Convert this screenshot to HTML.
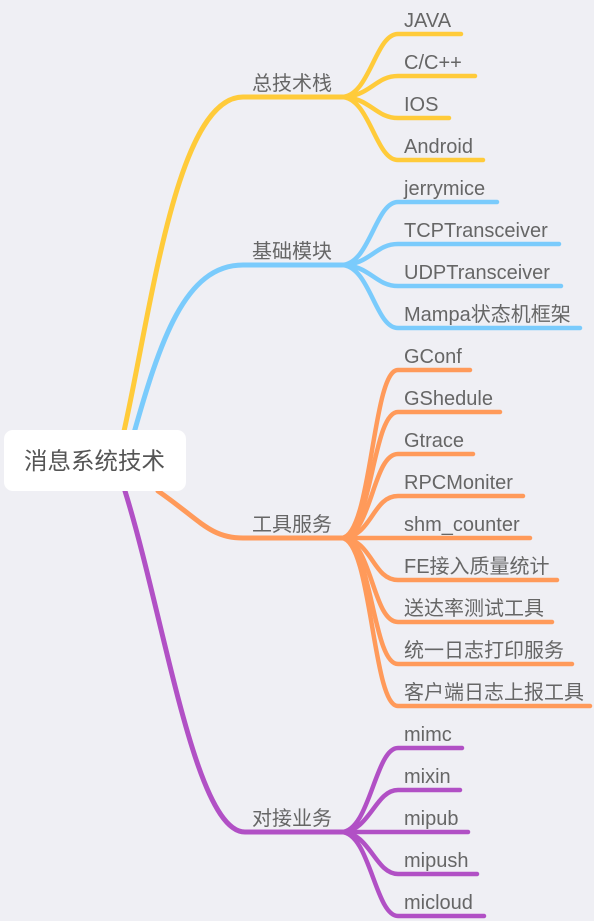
<!DOCTYPE html>
<html><head><meta charset="utf-8"><style>
html,body{margin:0;padding:0;background:#efeff4;}
svg{display:block}
text{font-family:"Liberation Sans","Noto Sans CJK SC",sans-serif;fill:#666;font-size:20px}
</style></head><body>
<svg width="594" height="921" viewBox="0 0 594 921" xmlns="http://www.w3.org/2000/svg">
<g fill="none" stroke-linecap="round" stroke-width="5">
<path stroke="#ffcb3a" d="M122,440 C150,320 175,97 243,97 L341,97"/>
<path stroke="#7acbfc" d="M132,440 C160,340 185,265 243,265 L341,265"/>
<path stroke="#ff9a5a" d="M158,491 C200,520 210,538 243,538 L341,538"/>
<path stroke="#b150c5" d="M125,491 C165,620 195,832 245,832 L341,832"/>
</g>
<g fill="none" stroke-linecap="round" stroke-width="4.5">
<g stroke="#ffcb3a">
<path d="M341,97 C370,97 375,34 398,34 L461,34"/>
<path d="M341,97 C370,97 375,76 398,76 L475,76"/>
<path d="M341,97 C370,97 375,118 398,118 L449,118"/>
<path d="M341,97 C370,97 375,160 398,160 L483,160"/>
</g>
<g stroke="#7acbfc">
<path d="M341,265 C370,265 375,202 398,202 L497,202"/>
<path d="M341,265 C370,265 375,244 398,244 L559,244"/>
<path d="M341,265 C370,265 375,286 398,286 L561,286"/>
<path d="M341,265 C370,265 375,328 398,328 L580,328"/>
</g>
<g stroke="#ff9a5a">
<path d="M341,538 C372,538 372,370 398,370 L470,370"/>
<path d="M341,538 C372,538 372,412 398,412 L500,412"/>
<path d="M341,538 C372,538 372,454 398,454 L473,454"/>
<path d="M341,538 C372,538 372,496 398,496 L523,496"/>
<path d="M341,538 L530,538"/>
<path d="M341,538 C372,538 372,580 398,580 L557,580"/>
<path d="M341,538 C372,538 372,622 398,622 L552,622"/>
<path d="M341,538 C372,538 372,664 398,664 L572,664"/>
<path d="M341,538 C372,538 372,706 398,706 L590,706"/>
</g>
<g stroke="#b150c5">
<path d="M341,832 C370,832 375,748 398,748 L462,748"/>
<path d="M341,832 C370,832 375,790 398,790 L460,790"/>
<path d="M341,832 L468,832"/>
<path d="M341,832 C370,832 375,874 398,874 L477,874"/>
<path d="M341,832 C370,832 375,916 398,916 L484,916"/>
</g>
</g>
<rect x="4" y="430" width="182" height="61" rx="9" fill="#fff"/>
<text x="24" y="469" style="font-size:23.5px;fill:#555">消息系统技术</text>
<g>
<text x="252" y="90">总技术栈</text>
<text x="252" y="258">基础模块</text>
<text x="252" y="531">工具服务</text>
<text x="252" y="825">对接业务</text>
</g>
<g>
<text x="404" y="27">JAVA</text>
<text x="404" y="69">C/C++</text>
<text x="404" y="111">IOS</text>
<text x="404" y="153">Android</text>
<text x="404" y="195">jerrymice</text>
<text x="404" y="237">TCPTransceiver</text>
<text x="404" y="279">UDPTransceiver</text>
<text x="404" y="321">Mampa状态机框架</text>
<text x="404" y="363">GConf</text>
<text x="404" y="405">GShedule</text>
<text x="404" y="447">Gtrace</text>
<text x="404" y="489">RPCMoniter</text>
<text x="404" y="531">shm_counter</text>
<text x="404" y="573">FE接入质量统计</text>
<text x="404" y="615">送达率测试工具</text>
<text x="404" y="657">统一日志打印服务</text>
<text x="404" y="699">客户端日志上报工具</text>
<text x="404" y="741">mimc</text>
<text x="404" y="783">mixin</text>
<text x="404" y="825">mipub</text>
<text x="404" y="867">mipush</text>
<text x="404" y="909">micloud</text>
</g>
</svg>
</body></html>
